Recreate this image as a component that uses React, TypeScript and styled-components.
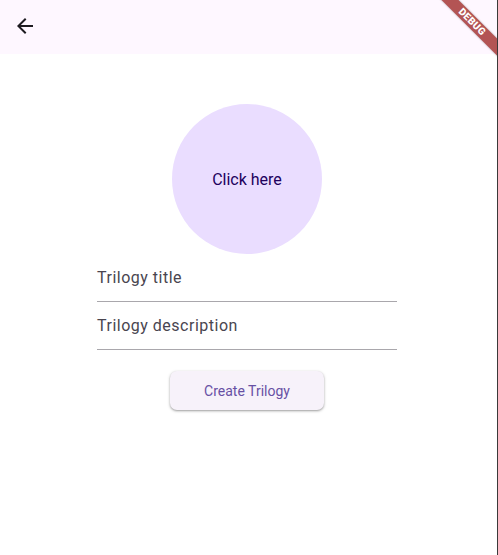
import React from "react";
import styled, { createGlobalStyle } from "styled-components";

const Global = createGlobalStyle`
  html, body { margin: 0; padding: 0; background: #ffffff; }
  body { font-family: Roboto, "Noto Sans", sans-serif; }
  * { box-sizing: border-box; }
`;

const Screen = styled.div`
  position: relative;
  width: 498px;
  height: 555px;
  background: #ffffff;
  border-right: 1px solid #3a3a3a;
  overflow: hidden;
  display: flex;
  flex-direction: column;
`;

const AppBar = styled.header`
  height: 54px;
  flex: none;
  background: #fef7ff;
  display: flex;
  align-items: center;
  padding-left: 13px;
`;

const IconButton = styled.button`
  width: 24px;
  height: 24px;
  border: none;
  background: transparent;
  padding: 0;
  display: flex;
  align-items: center;
  justify-content: center;
  color: #1d1b20;
  margin-top: -2px;
`;

const Body = styled.main`
  display: flex;
  flex-direction: column;
  align-items: center;
  padding-top: 50px;
  padding-right: 3px;
`;

const Avatar = styled.button`
  width: 150px;
  height: 150px;
  border-radius: 50%;
  border: none;
  background: #eaddff;
  color: #21005d;
  font-family: Roboto, sans-serif;
  font-size: 16px;
  display: flex;
  align-items: center;
  justify-content: center;
  padding: 0;
`;

const Field = styled.label`
  width: 300px;
  height: 48px;
  display: flex;
  align-items: center;
  border-bottom: 1px solid #a9a7ac;
  font-family: Roboto, sans-serif;
  font-size: 16px;
  letter-spacing: 0.5px;
  color: #49454f;
`;

const FieldText = styled.span`
  margin-top: 0px;
`;

const PrimaryButton = styled.button`
  margin-top: 21px;
  width: 154px;
  height: 39px;
  border: none;
  border-radius: 7px;
  background: #f7f2fa;
  color: #6750a4;
  font-family: Roboto, sans-serif;
  font-size: 14px;
  box-shadow: 0 1px 2px rgba(0, 0, 0, 0.3), 0 1px 3px 1px rgba(0, 0, 0, 0.08);
`;

const Banner = styled.div`
  position: absolute;
  top: 16px;
  right: -25px;
  width: 100px;
  height: 12px;
  background: #b35454;
  color: #ffffff;
  font-family: Roboto, "Liberation Sans", sans-serif;
  font-weight: 900;
  font-size: 10px;
  letter-spacing: 0.3px;
  line-height: 12px;
  text-align: center;
  transform: rotate(45deg);
  box-shadow: 0 0 2px rgba(0, 0, 0, 0.35);
`;

export default function App() {
  return (
    <>
      <Global />
      <Screen>
        <AppBar>
          <IconButton aria-label="Back">
            <svg width="24" height="24" viewBox="0 0 24 24">
              <path
                d="M20 11H7.83l5.59-5.59L12 4l-8 8 8 8 1.41-1.41L7.83 13H20v-2z"
                fill="currentColor"
              />
            </svg>
          </IconButton>
        </AppBar>
        <Body>
          <Avatar>Click here</Avatar>
          <Field>
            <FieldText>Trilogy title</FieldText>
          </Field>
          <Field>
            <FieldText>Trilogy description</FieldText>
          </Field>
          <PrimaryButton>Create Trilogy</PrimaryButton>
        </Body>
        <Banner>DEBUG</Banner>
      </Screen>
    </>
  );
}
